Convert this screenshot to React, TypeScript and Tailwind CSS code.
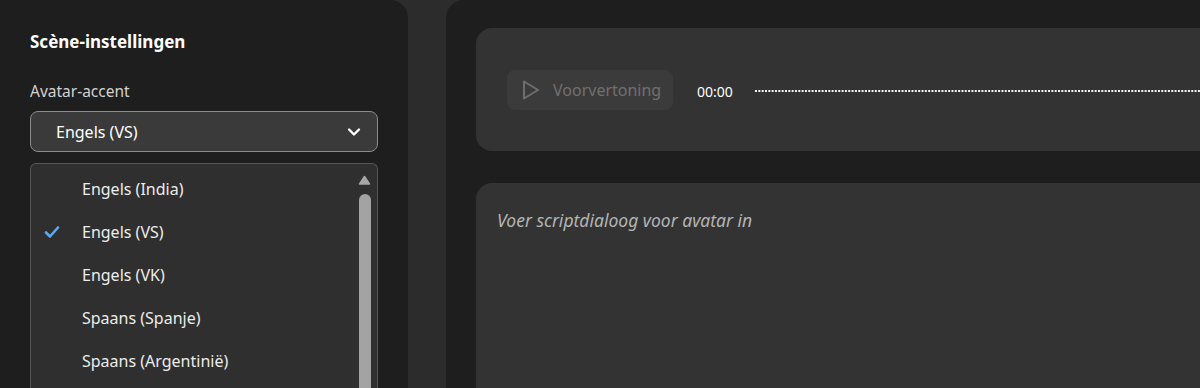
import React from "react";

const items = [
  { label: "Engels (India)", checked: false },
  { label: "Engels (VS)", checked: true },
  { label: "Engels (VK)", checked: false },
  { label: "Spaans (Spanje)", checked: false },
  { label: "Spaans (Argentinië)", checked: false },
];

export default function App() {
  return (
    <div
      className="w-[1200px] h-[388px] overflow-hidden bg-[#2c2c2c] flex gap-[38px] text-[#e8e8e8]"
      style={{ fontFamily: '"Noto Sans", "Open Sans", sans-serif' }}
    >
      {/* Left panel */}
      <div className="w-[408px] shrink-0 bg-[#1e1e1e] rounded-tr-[18px] pt-[30px] pl-[30px] pr-[30px] flex flex-col">
        <div className="shrink-0 text-[17px] font-bold text-white leading-[24px]">Scène-instellingen</div>
        <div className="shrink-0 mt-[26px] text-[15.5px] text-[#d2d2d2] leading-[22px]">Avatar-accent</div>
        <div className="shrink-0 mt-[9px] h-[41px] rounded-[8px] border border-[#8c8c8c] bg-[#3a3a3a] flex items-center pl-[25px] pr-[16px] justify-between">
          <span className="text-[16px] text-white">Engels (VS)</span>
          <svg width="14" height="10" viewBox="0 0 14 10">
            <path d="M2 2.5 L7 7.5 L12 2.5" stroke="#ffffff" strokeWidth="2.4" fill="none" strokeLinecap="round" strokeLinejoin="round" />
          </svg>
        </div>
        <div className="mt-[11px] flex-1 min-h-0 rounded-t-[6px] border border-b-0 border-[#555555] bg-[#2f2f2f] flex overflow-hidden">
          <div className="flex-1 pt-[3px]">
            {items.map((it) => (
              <div key={it.label} className="h-[43px] flex items-center">
                <div className="w-[51px] flex justify-start pl-[13px]">
                  {it.checked && (
                    <svg width="16" height="14" viewBox="0 0 16 14">
                      <path d="M2 7.5 L6 11.5 L14 2.5" stroke="#5ba9ec" strokeWidth="2.6" fill="none" strokeLinecap="round" strokeLinejoin="round" />
                    </svg>
                  )}
                </div>
                <span className="text-[16px] text-[#ececec]">{it.label}</span>
              </div>
            ))}
          </div>
          <div className="w-[20px] flex flex-col items-center pt-[11px] pr-[5px]">
            <svg width="13" height="10" viewBox="0 0 13 10">
              <path d="M1.5 9 L6.5 1.5 L11.5 9 Z" fill="#a6a6a6" stroke="#a6a6a6" strokeWidth="1.5" strokeLinejoin="round" />
            </svg>
            <div className="mt-[9px] w-[12px] flex-1 rounded-t-[6px] bg-[#a3a3a3]" />
          </div>
        </div>
      </div>

      {/* Right panel */}
      <div className="flex-1 bg-[#1e1e1e] rounded-tl-[18px] pt-[28px] pl-[30px] flex flex-col gap-[32px]">
        <div className="shrink-0 h-[123px] rounded-l-[16px] bg-[#333333] flex items-center pl-[31px]">
          <div className="h-[40px] w-[166px] rounded-[8px] bg-[#3b3b3b] flex items-center pl-[14px] gap-[12px]">
            <svg width="20" height="22" viewBox="0 0 20 22">
              <path d="M3 2.5 L17 11 L3 19.5 Z" stroke="#6e6e6e" strokeWidth="2" fill="none" strokeLinejoin="round" />
            </svg>
            <span className="text-[16px] text-[#707070]">Voorvertoning</span>
          </div>
          <span className="ml-[24px] mt-[3px] text-[14px] text-white">00:00</span>
          <svg className="ml-[21px] mt-[3px] flex-1" height="4">
            <line x1="1" y1="2" x2="100%" y2="2" stroke="#f4f4f4" strokeWidth="2" strokeDasharray="2 1.33" />
          </svg>
        </div>
        <div className="flex-1 rounded-tl-[16px] bg-[#333333] pt-[24px] pl-[21px]">
          <span className="text-[17.5px] italic text-[#b4b4b4]">Voer scriptdialoog voor avatar in</span>
        </div>
      </div>
    </div>
  );
}
